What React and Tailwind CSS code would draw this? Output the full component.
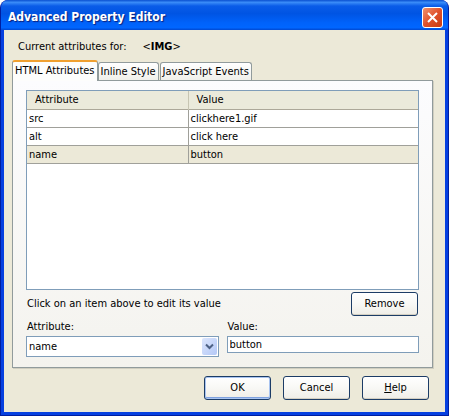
import React, { useState } from 'react';

const tabs = ['HTML Attributes', 'Inline Style', 'JavaScript Events'];

const initialRows = [
  { attribute: 'src', value: 'clickhere1.gif' },
  { attribute: 'alt', value: 'click here' },
  { attribute: 'name', value: 'button' },
];

const DialogButton = ({ children, primary, onClick }) => (
  <button
    type="button"
    onClick={onClick}
    className={`h-6 w-[67px] rounded-[3px] border border-[#1c3c66] bg-gradient-to-b from-white via-[#f8f8f5] to-[#efede6] text-center leading-4 ${
      primary ? 'shadow-[inset_0_0_0_1px_#a9c4f0,inset_0_-2px_0_#7fa2e0]' : 'shadow-[inset_0_-1px_0_#d3cfc2]'
    }`}
  >
    {children}
  </button>
);

const TitleBar = () => (
  <header className="flex h-[30px] shrink-0 items-center justify-between bg-[linear-gradient(to_bottom,#0a50d0_0%,#3a8cf8_8%,#0a5ce8_20%,#0054e3_45%,#0062fa_75%,#0066ff_92%,#0048d0_100%)] pr-[5px] pl-[7px] pt-1">
    <h1 className="text-[12px] leading-4 font-bold text-white [text-shadow:1px_1px_1px_#0a1f7a]">
      Advanced Property Editor
    </h1>
    <button
      type="button"
      aria-label="Close"
      className="flex h-[21px] w-[21px] items-center justify-center rounded-[3px] border border-white bg-gradient-to-br from-[#f0906c] via-[#e0502a] to-[#c83a10]"
    >
      <svg width="13" height="13" viewBox="0 0 13 13" fill="none" stroke="white" strokeWidth="2">
        <path d="M2 2 11 11M11 2 2 11" />
      </svg>
    </button>
  </header>
);

const App = () => {
  const [activeTab, setActiveTab] = useState(0);
  const [rows, setRows] = useState(initialRows);
  const [selected, setSelected] = useState('name');

  const current = rows.find((row) => row.attribute === selected);

  const updateValue = (value) => {
    setRows(rows.map((row) => (row.attribute === selected ? { ...row, value } : row)));
  };

  const removeRow = () => {
    const rest = rows.filter((row) => row.attribute !== selected);
    setRows(rest);
    setSelected(rest.length > 0 ? rest[0].attribute : '');
  };

  return (
    <div className="flex min-h-screen flex-col overflow-hidden rounded-t-lg border-x border-b border-[#001ea0] bg-[#0831d9] font-['DejaVu_Sans_Condensed','DejaVu_Sans',sans-serif] text-[11px] leading-4 text-black">
      <TitleBar />

      <main className="flex flex-1 flex-col border-x-3 border-b-3 border-[#0640e0] bg-[#ece9d8] pt-[9px] pr-3 pb-3 pl-2">
        <p className="flex gap-4 pl-1.5">
          <span>Current attributes for:</span>
          <span>
            &lt;<b>IMG</b>&gt;
          </span>
        </p>

        <div role="tablist" className="mt-[5px] flex items-end">
          {tabs.map((tab, index) => (
            <button
              key={tab}
              type="button"
              role="tab"
              aria-selected={activeTab === index}
              onClick={() => setActiveTab(index)}
              className={
                activeTab === index
                  ? 'z-10 -mb-px h-[21px] rounded-t-[3px] border border-t-2 border-b-0 border-[#919b9c] border-t-[#f0a030] bg-[#fdfdfc] px-0.5 pb-0.5'
                  : 'mr-px h-[18px] rounded-t-[3px] border border-b-0 border-[#919b9c] bg-gradient-to-b from-white to-[#f0f0ea] px-0.5'
              }
            >
              {tab}
            </button>
          ))}
        </div>

        <section className="flex flex-1 flex-col border border-[#919b9c] bg-gradient-to-b from-[#fcfcfe] to-[#f4f3ee] px-[13px] pt-[9px] pb-2.5 shadow-[1px_1px_0_#d0cec0]">
          <div className="flex-1 border border-[#7f9db9] bg-white">
            <table className="w-full table-fixed border-collapse text-left">
              <thead>
                <tr className="h-[18px] border-b border-[#aca899] bg-[#ebeadb]">
                  <th className="w-[161px] border-r border-[#c7c5b2] pt-px pl-2 leading-4 font-normal">Attribute</th>
                  <th className="pt-px pl-2 leading-4 font-normal">Value</th>
                </tr>
              </thead>
              <tbody>
                {rows.map((row) => (
                  <tr
                    key={row.attribute}
                    onClick={() => setSelected(row.attribute)}
                    className={`h-[18px] border-b border-[#a0a09a] ${row.attribute === selected ? 'bg-[#ece9d8]' : 'bg-white'}`}
                  >
                    <td className="border-r border-[#a0a09a] pt-px pl-0.5">{row.attribute}</td>
                    <td className="pt-px pl-0.5">{row.value}</td>
                  </tr>
                ))}
              </tbody>
            </table>
          </div>

          <div className="mt-0.5 flex items-center justify-between pr-px">
            <p className="pl-px">Click on an item above to edit its value</p>
            <DialogButton onClick={removeRow}>Remove</DialogButton>
          </div>

          <div className="mt-[3px] grid grid-cols-2 items-start gap-2">
            <div className="flex flex-col gap-px">
              <label htmlFor="attribute" className="pl-px">
                Attribute:
              </label>
              <div className="relative">
                <select
                  id="attribute"
                  value={selected}
                  onChange={(e) => setSelected(e.target.value)}
                  className="h-[21px] w-full appearance-none border border-[#7f9db9] bg-white pl-0.5"
                >
                  {rows.map((row) => (
                    <option key={row.attribute}>{row.attribute}</option>
                  ))}
                </select>
                <span className="pointer-events-none absolute inset-y-0.5 right-0.5 flex w-[15px] items-center justify-center rounded-xs bg-gradient-to-br from-[#dce6fd] to-[#b4c8f6]">
                  <svg width="9" height="7" viewBox="0 0 9 7" fill="none" stroke="#4d6185" strokeWidth="2">
                    <path d="M1 1.5 4.5 5 8 1.5" />
                  </svg>
                </span>
              </div>
            </div>
            <div className="flex flex-col gap-px">
              <label htmlFor="value" className="pl-px">
                Value:
              </label>
              <input
                id="value"
                type="text"
                value={current ? current.value : ''}
                onChange={(e) => updateValue(e.target.value)}
                className="h-[17px] w-full border border-[#7f9db9] bg-white pl-0.5"
              />
            </div>
          </div>
        </section>

        <footer className="mt-2 flex justify-end gap-3 pr-1">
          <DialogButton primary>OK</DialogButton>
          <DialogButton>Cancel</DialogButton>
          <DialogButton>
            <span className="underline">H</span>elp
          </DialogButton>
        </footer>
      </main>
    </div>
  );
};

export default App;
